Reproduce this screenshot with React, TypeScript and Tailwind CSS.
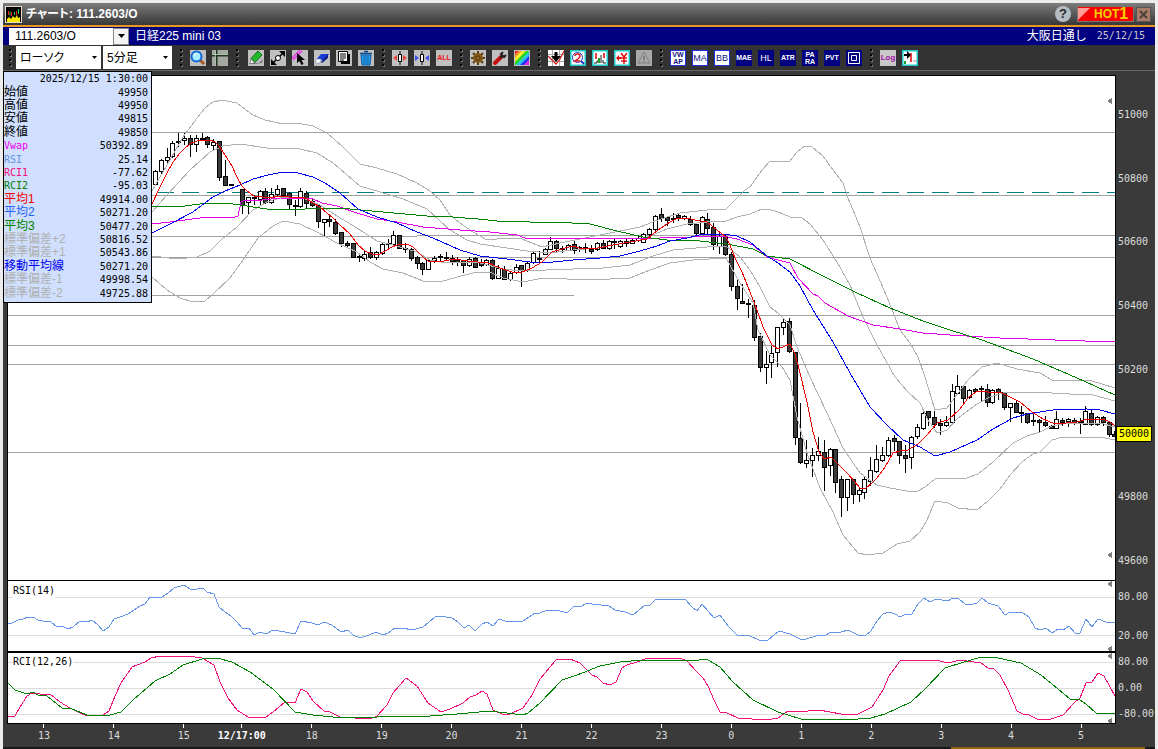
import type { ReactNode } from 'react';

// high, body top, body bottom, low, 1 = down candle
type Candle = [number, number, number, number, 0 | 1];

const FIRST_X = 155.5;
const STEP = 5.815;

const candles: (Candle | null)[] = [
    [170, 171, 184, 185, 0], [159, 160, 171, 173, 0], [148, 157, 160, 162, 0], [141, 143, 156, 157, 0],
    [133, 141, 142, 146, 0], [133, 138, 140, 144, 0], [135, 138, 144, 156, 1], [135, 138, 144, 151, 0],
    [133, 138, 139, 140, 1], [136, 137, 144, 147, 1], [139, 142, 145, 149, 0], [141, 141, 177, 180, 1],
    [160, 176, 185, 185, 1], [184, 184, 185, 185, 1], null, [189, 189, 205, 213, 1],
    [197, 197, 202, 213, 0], [195, 197, 198, 204, 1], [190, 191, 199, 204, 0], [188, 191, 202, 203, 1],
    [188, 194, 202, 203, 0], [185, 189, 194, 196, 0], [188, 188, 195, 196, 1], [192, 193, 204, 209, 1],
    [200, 205, 206, 215, 1], [188, 191, 206, 207, 0], [191, 193, 203, 207, 1], [199, 201, 205, 206, 1],
    [204, 205, 221, 227, 1], [219, 219, 222, 236, 0], [216, 219, 221, 226, 1], [219, 222, 233, 234, 1],
    [232, 232, 243, 246, 1], [241, 243, 245, 247, 1], [243, 243, 257, 257, 1], [253, 256, 257, 261, 1],
    [251, 254, 258, 260, 0], [247, 252, 257, 258, 1], [251, 252, 257, 259, 0], [243, 244, 253, 254, 0],
    [239, 243, 244, 249, 1], [231, 235, 244, 244, 0], [235, 235, 248, 248, 1], [243, 248, 249, 252, 1],
    [248, 249, 258, 260, 1], [256, 257, 263, 268, 1], [262, 263, 269, 274, 1], [260, 260, 269, 269, 0],
    [256, 258, 260, 262, 0], [254, 256, 257, 260, 0], [252, 257, 258, 260, 0], [255, 258, 261, 264, 1],
    [257, 260, 262, 265, 1], [260, 260, 265, 272, 1], [257, 259, 265, 266, 0], [257, 258, 267, 267, 1],
    [259, 262, 265, 266, 1], [259, 260, 264, 265, 0], [259, 260, 278, 279, 1], [265, 268, 278, 278, 0],
    [266, 269, 279, 279, 1], [271, 273, 279, 280, 0], [264, 267, 272, 273, 0], [265, 265, 270, 286, 1],
    [262, 263, 270, 271, 0], [252, 253, 262, 263, 0], [251, 258, 259, 261, 1], [248, 249, 254, 254, 0],
    [237, 241, 249, 249, 0], [240, 241, 248, 251, 1], [246, 248, 249, 252, 1], [244, 245, 250, 250, 0],
    [241, 244, 250, 253, 1], [246, 247, 249, 251, 0], [243, 247, 248, 252, 1], [245, 249, 251, 253, 1],
    [242, 243, 249, 250, 0], [240, 243, 248, 248, 1], [240, 241, 248, 249, 0], [239, 241, 242, 248, 1],
    [240, 241, 246, 247, 0], [238, 241, 243, 246, 1], [239, 240, 243, 243, 0], [235, 238, 240, 241, 0],
    [233, 234, 242, 242, 0], [228, 229, 234, 235, 0], [215, 216, 229, 230, 0], [208, 214, 218, 221, 1],
    [216, 217, 220, 225, 1], [213, 218, 219, 222, 1], [213, 215, 217, 220, 1], [215, 216, 218, 219, 0],
    [216, 219, 224, 225, 1], [223, 224, 233, 234, 1], [216, 217, 233, 234, 0], [213, 219, 228, 233, 1],
    [223, 227, 244, 249, 1], [233, 236, 246, 253, 0], [235, 236, 254, 255, 1], [252, 254, 286, 290, 1],
    [278, 286, 298, 309, 1], [284, 301, 303, 303, 1], [299, 303, 304, 317, 1], [300, 305, 337, 340, 1],
    [333, 336, 367, 371, 1], [351, 364, 367, 383, 0], [346, 353, 362, 377, 0], [327, 327, 352, 366, 0],
    [319, 322, 327, 334, 0], [318, 321, 351, 352, 1], [352, 352, 437, 444, 1], [403, 438, 462, 463, 1],
    [440, 460, 463, 467, 0], [448, 455, 460, 476, 0], [437, 451, 455, 460, 0], [440, 452, 467, 490, 1],
    [448, 449, 465, 475, 0], [449, 449, 482, 492, 1], [476, 479, 497, 516, 1], [479, 479, 497, 510, 0],
    [479, 479, 494, 503, 1], [488, 490, 494, 501, 0], [477, 479, 492, 498, 0], [457, 470, 481, 485, 0],
    [445, 459, 471, 472, 0], [447, 455, 460, 461, 0], [437, 440, 455, 456, 0], [435, 438, 441, 450, 1],
    [441, 441, 455, 463, 1], [445, 455, 458, 472, 1], [436, 437, 457, 468, 0], [424, 427, 436, 438, 0],
    [409, 413, 428, 429, 0], [411, 411, 417, 425, 1], [411, 417, 424, 427, 1], [419, 423, 425, 434, 1],
    [416, 422, 425, 426, 0], [384, 391, 422, 423, 0], [375, 386, 393, 393, 0], [386, 386, 398, 402, 1],
    [389, 390, 397, 398, 0], [388, 389, 391, 391, 1], [386, 388, 389, 401, 1], [384, 389, 402, 406, 1],
    [389, 390, 402, 403, 0], [388, 389, 392, 399, 1], [392, 392, 407, 409, 1], [403, 403, 407, 421, 0],
    [401, 403, 412, 412, 1], [406, 412, 413, 422, 1], [413, 413, 422, 423, 1], [414, 420, 421, 425, 1],
    [419, 420, 422, 431, 1], [416, 422, 425, 426, 1], [425, 426, 428, 428, 1], [411, 419, 428, 428, 0],
    [418, 420, 422, 425, 1], [418, 419, 421, 426, 0], [418, 420, 422, 424, 1], [418, 421, 422, 433, 1],
    [406, 411, 424, 424, 0], [410, 413, 424, 425, 1], [416, 417, 424, 425, 0], [416, 417, 422, 425, 1],
    [421, 422, 434, 436, 1], [431, 434, 436, 436, 1],
];

const priceLines = [
    {
        name: '+2',
        color: '#b0b0b0',
        points: '152,191 167,165 183,137 197,118 205,108 213,102 222,100 237,103 253,115 265,120 283,124 297,123 313,126 327,133 343,147 360,164 377,168 397,174 417,183 430,191 440,200 450,215 460,223 473,232 487,240 507,238 522,239 532,243 542,247 560,243 590,237 620,231 640,227 658,220 680,213 707,210 726,209 737,198 745,190 750,187 762,170 770,161 780,161 789,162 797,152 805,146 812,147 823,156 833,170 843,183 848,198 860,227 870,258 887,297 900,330 910,343 918,357 925,377 935,410 947,408 955,397 968,380 982,367 997,363 1017,369 1040,373 1052,380 1092,381 1115,388',
    },
    {
        name: '+1',
        color: '#b0b0b0',
        points: '152,212 167,195 190,170 210,152 223,146 240,144 267,148 300,149 317,153 333,163 360,186 380,192 403,199 427,209 440,221 450,230 467,240 480,244 507,248 527,251 550,253 573,250 597,248 640,240 667,229 687,224 707,222 726,221 737,217 750,214 762,209 768,209 778,212 790,217 802,218 810,224 823,240 837,262 850,285 863,317 877,345 895,377 908,392 920,403 928,420 937,433 947,430 957,419 977,404 990,397 1003,393 1033,392 1070,394 1093,395 1115,401',
    },
    {
        name: '-1',
        color: '#b0b0b0',
        points: '152,256 178,259 197,257 210,251 222,239 237,227 253,210 267,202 283,197 303,198 320,205 337,216 357,228 377,241 397,246 417,252 430,260 440,262 480,263 503,269 520,271 573,269 603,268 630,265 653,256 673,250 707,247 726,246 740,257 750,270 760,287 770,307 778,313 790,325 797,347 810,377 827,413 843,448 860,473 877,485 890,488 907,491 918,491 925,487 935,479 967,478 978,474 993,462 1013,443 1027,436 1040,432 1052,426 1067,423 1100,423 1115,427',
    },
    {
        name: '-2',
        color: '#b0b0b0',
        points: '152,277 167,290 180,298 193,302 205,301 213,294 230,278 243,260 258,238 273,226 283,221 300,224 317,232 337,243 357,252 370,262 383,269 403,273 423,281 440,282 457,277 473,273 490,272 503,278 523,282 543,278 590,280 630,278 650,270 670,263 693,260 726,258 740,283 753,303 758,330 770,355 782,367 790,380 797,417 807,453 820,488 833,512 843,535 858,553 867,555 883,553 897,544 910,541 920,532 927,520 935,501 948,503 958,508 977,510 988,501 1000,489 1010,475 1023,461 1033,454 1040,452 1052,440 1063,437 1100,437 1115,440',
    },
    {
        name: 'vwap',
        color: '#e800e8',
        points: '152,224 170,222 200,218 235,217 238,216 241,202 245,200 253,201 280,198 313,199 322,203 337,206 357,213 377,219 397,222 423,227 460,230 490,232 517,235 525,238 557,238 627,239 693,237 723,236 737,239 753,245 767,257 778,260 790,263 798,278 813,294 818,296 825,303 848,316 873,325 900,329 923,333 950,335 1000,338 1055,340 1115,342',
    },
    {
        name: 'ma3',
        color: '#008000',
        points: '152,206 177,207 208,203 233,204 267,209 293,210 317,208 350,209 383,212 427,216 440,216 478,219 497,221 530,222 553,222 590,224 617,231 643,237 667,240 700,241 727,244 753,249 767,256 790,259 823,276 857,293 890,308 923,321 950,330 982,340 1033,359 1077,378 1115,395',
    },
    {
        name: 'ma2',
        color: '#0000f0',
        points: '152,233 170,224 193,212 213,197 225,191 240,185 253,179 268,175 283,172 298,173 313,177 325,183 340,193 358,209 377,217 397,223 417,232 433,238 460,250 480,256 507,259 530,262 553,262 573,260 600,258 620,256 640,251 657,246 670,241 687,238 703,234 723,234 737,236 750,242 767,256 778,263 790,272 800,286 813,310 833,342 850,373 870,407 887,425 903,440 920,447 935,456 950,452 977,440 993,429 1013,418 1027,414 1053,410 1087,409 1100,410 1115,414',
    },
    {
        name: 'ma1',
        color: '#f00000',
        points: '152,204 160,187 167,173 173,162 180,153 185,148 190,144 197,141 202,140 210,140 215,142 219,146 225,155 232,166 237,177 242,186 247,191 254,196 263,197 271,198 278,196 285,196 293,198 302,197 307,199 313,203 320,207 327,213 333,218 340,225 350,234 358,245 365,251 372,254 378,255 385,251 392,247 397,245 407,244 413,247 423,257 428,261 440,262 453,259 468,261 488,263 500,268 512,272 522,272 532,268 542,262 552,252 562,249 572,246 583,249 598,248 613,245 630,242 647,239 658,230 670,222 678,218 687,218 695,220 707,222 717,230 726,237 730,245 735,258 742,272 750,292 757,310 763,327 772,345 778,349 790,344 795,354 800,373 807,402 813,432 819,452 824,459 831,457 837,463 842,468 848,474 860,488 866,488 872,483 877,478 885,467 893,453 900,451 908,450 918,444 927,435 937,423 948,420 960,409 968,398 977,391 988,392 1000,392 1010,397 1020,402 1032,412 1043,419 1055,424 1077,422 1088,419 1103,419 1110,422 1115,426',
    },
];

const RSI =
    '8,623 12,623 18,620 23,619 28,617 33,617 38,620 43,621 51,622 57,627 62,626 68,629 73,627 80,621 87,622 92,620 98,625 103,631 109,627 114,619 120,617 128,614 134,610 140,606 145,604 150,597 162,597 168,593 174,588 184,585 190,589 197,589 203,588 207,592 214,594 219,607 225,612 231,616 237,622 242,628 249,628 254,635 260,632 266,634 273,630 285,632 295,634 301,621 312,623 318,625 324,622 332,625 341,632 348,630 353,635 360,638 369,635 376,632 383,635 388,633 395,628 403,628 412,630 423,627 435,617 440,616 452,618 458,622 464,628 469,625 475,631 482,624 487,622 493,626 499,619 505,621 523,621 535,613 540,613 547,610 557,610 567,613 574,606 580,607 587,603 592,604 609,606 615,610 625,612 633,615 645,605 650,605 656,599 662,600 670,599 685,599 692,607 697,611 702,604 708,611 714,618 720,615 728,626 737,635 748,635 761,641 768,640 779,631 790,634 800,639 806,639 816,636 826,635 831,632 841,632 848,630 860,636 866,635 871,631 877,621 883,614 889,612 895,614 900,617 906,614 912,614 918,604 924,598 930,602 936,599 948,601 953,598 959,599 965,604 973,604 977,603 982,598 988,603 998,606 1005,615 1010,612 1023,613 1029,617 1035,628 1040,630 1046,628 1052,633 1058,629 1063,630 1069,626 1075,633 1080,633 1086,619 1092,627 1098,619 1106,622 1115,623';
const RCI1 =
    '8,716 15,716 20,707 27,696 32,693 40,694 50,694 60,702 70,708 80,713 87,716 103,715 109,711 115,696 121,683 132,667 145,662 151,658 160,656 187,656 202,658 214,665 220,682 228,698 237,710 248,717 266,717 273,712 285,702 295,703 301,689 307,692 313,701 324,711 330,712 340,717 370,719 377,716 387,705 393,693 406,678 417,686 428,703 441,712 450,709 463,703 470,697 476,695 482,691 487,694 493,710 502,714 510,714 523,708 532,695 540,679 550,667 556,660 570,659 580,663 592,675 597,677 603,683 610,685 616,682 622,668 627,665 637,662 648,658 680,658 687,661 697,672 703,678 708,686 714,700 720,712 727,713 738,718 766,720 778,718 788,711 808,711 819,710 841,714 858,714 872,707 883,690 889,676 900,661 925,660 940,661 948,663 960,660 981,663 988,668 994,669 1000,675 1008,690 1017,711 1023,714 1029,715 1037,719 1051,719 1063,715 1075,702 1080,698 1086,683 1092,682 1098,673 1104,676 1115,696';
const RCI2 =
    '8,683 15,690 27,694 33,692 38,695 47,696 62,708 72,709 87,715 110,715 121,712 133,700 155,681 170,674 183,665 202,659 217,658 232,662 250,672 273,689 295,712 313,715 333,717 377,717 403,716 430,716 457,714 490,711 523,715 528,713 540,703 562,680 577,675 600,666 620,662 643,660 680,660 695,661 703,659 708,660 720,667 733,682 753,700 778,712 801,719 858,719 871,718 885,714 911,702 925,689 945,668 961,663 981,657 998,658 1021,663 1041,675 1058,689 1070,699 1080,700 1086,704 1096,713 1115,713';

const legend = [
    { label: '始値', value: '49950', tone: 'text-black' },
    { label: '高値', value: '49950', tone: 'text-black' },
    { label: '安値', value: '49815', tone: 'text-black' },
    { label: '終値', value: '49850', tone: 'text-black' },
    { label: 'Vwap', value: '50392.89', tone: 'text-[#f000f0]', mono: true },
    { label: 'RSI', value: '25.14', tone: 'text-[#6495e0]', mono: true },
    { label: 'RCI1', value: '-77.62', tone: 'text-[#f0107c]', mono: true },
    { label: 'RCI2', value: '-95.03', tone: 'text-[#008000]', mono: true },
    { label: '平均1', value: '49914.00', tone: 'text-[#f00000]' },
    { label: '平均2', value: '50271.20', tone: 'text-[#1e64f0]' },
    { label: '平均3', value: '50477.20', tone: 'text-[#008000]' },
    { label: '標準偏差+2', value: '50816.52', tone: 'text-[#b0b0b0]' },
    { label: '標準偏差+1', value: '50543.86', tone: 'text-[#b0b0b0]' },
    { label: '移動平均線', value: '50271.20', tone: 'text-[#0000f0]' },
    { label: '標準偏差-1', value: '49998.54', tone: 'text-[#b0b0b0]' },
    { label: '標準偏差-2', value: '49725.88', tone: 'text-[#b0b0b0]' },
];

const hoursAfterOpen = ['18', '19', '20', '21', '22', '23', '0', '1', '2', '3', '4', '5'];

function Grip({ first = false }: { first?: boolean }) {
    return (
        <span className={first ? 'flex w-[3px] flex-col gap-[3px]' : 'ml-2 mr-[7px] flex w-[3px] flex-col gap-[3px]'}>
            {[0, 1, 2, 3].map((n) => (
                <i key={n} className="h-0.5 w-0.5 bg-black shadow-[1px_1px_0_#777]" />
            ))}
        </span>
    );
}

function Tool({ label, tone = 'bg-[#c0c0c0]', children }: { label: string; tone?: string; children: ReactNode }) {
    return (
        <button aria-label={label} className={`h-4 w-4 shrink-0 ${tone}`}>
            <svg viewBox="0 0 16 16" className="block h-4 w-4">{children}</svg>
        </button>
    );
}

function Indicator({ lines, framed = false }: { lines: string[]; framed?: boolean }) {
    return (
        <button
            className={
                framed
                    ? 'flex h-4 w-4 shrink-0 flex-col items-center justify-center border border-[#2030e0] bg-white text-[#101080]'
                    : 'flex h-4 w-4 shrink-0 flex-col items-center justify-center bg-[#000080] text-white'
            }
        >
            {lines.map((line) => (
                <span
                    key={line}
                    className={
                        lines.length > 1
                            ? 'text-[7px] font-bold leading-[7px]'
                            : line.length > 2
                              ? 'text-[7px] font-bold leading-[14px]'
                              : 'text-[9px] leading-[14px]'
                    }
                >
                    {line}
                </span>
            ))}
        </button>
    );
}

function Combo({ label, value, width }: { label: string; value: string; width: string }) {
    return (
        <div className={`relative h-[23px] ${width}`}>
            <select aria-label={label} className="h-full w-full appearance-none bg-white pl-1 text-xs text-black [font-feature-settings:'palt']">
                <option>{value}</option>
            </select>
            <svg viewBox="0 0 5 3" className="pointer-events-none absolute right-1 top-2.5 h-[3px] w-[5px]">
                <path d="M0 0h5L2.5 3z" />
            </svg>
        </div>
    );
}

function Marker({ y }: { y: number }) {
    return <path d={`M1107 ${y}l5-3v6z`} fill="#808080" />;
}

export default function App() {
    return (
        <div className="flex h-screen flex-col overflow-hidden border-x-[3px] border-t-[3px] border-[#ececec] bg-[#3a3a3a] font-['Liberation_Sans','Noto_Sans_CJK_JP',sans-serif] text-xs">
            {/* Title bar */}
            <header className="flex h-[22px] shrink-0 items-center bg-linear-to-b from-[#7c7c7c] to-[#383838] pl-0.5 pr-1">
                <svg viewBox="0 0 17 17" className="h-[17px] w-[17px]">
                    <rect x=".5" y=".5" width="16" height="16" fill="#000" stroke="#e8dcc8" />
                    <path d="M2 16v-3l2-2 2 2 2-3 2 2 2-3 1 3 2-1v5z" fill="#f8e800" />
                    <path d="M3.500 5v4M6.500 6v4M11.500 5v4" stroke="#f02020" />
                    <path d="M5 5.500v4M9.500 6v3M13.500 3v5" stroke="#20d060" />
                </svg>
                <h1 className="ml-1 text-xs font-bold text-white [font-feature-settings:'palt']">チャート: 111.2603/O</h1>
                <button aria-label="ヘルプ" className="ml-auto flex h-4 w-4 items-center justify-center rounded-full bg-[#b4bcc4] text-[13px] font-bold leading-4 text-[#282828]">?</button>
                <button className="ml-1.5 flex h-4 w-[57px] items-center border border-[#777] bg-[#f80000] text-[#f0d000]">
                    <svg viewBox="0 0 12 12" className="h-3.5 w-3">
                        <path d="M0 0h12L0 12z" fill="#ff9c94" />
                    </svg>
                    <span className="ml-1 text-xs font-bold leading-[14px]">HOT</span>
                    <span className="text-base font-bold leading-[14px]">1</span>
                </button>
                <button aria-label="閉じる" className="ml-0.5 h-[15px] w-[15px] border border-[#555] bg-[#a87c68]">
                    <svg viewBox="0 0 13 13" className="h-full w-full">
                        <path d="M3 3l7 7M10 3l-7 7" stroke="#4c4038" strokeWidth="2" />
                    </svg>
                </button>
            </header>
            <div className="h-0.5 shrink-0 bg-[#e89820]" />

            {/* Symbol bar */}
            <div className="flex h-[18px] shrink-0 items-center bg-[#000080] pl-1.5 pr-2.5 text-white">
                <div className="relative h-[17px] w-[120px]">
                    <select aria-label="銘柄" className="h-full w-full appearance-none bg-white pl-1.5 text-xs leading-4 text-black">
                        <option>111.2603/O</option>
                    </select>
                    <span className="pointer-events-none absolute right-0 top-0 flex h-full w-4 items-center justify-center border border-[#888] bg-[#f4f4f4]">
                        <svg viewBox="0 0 7 4" className="h-1 w-[7px]"><path d="M0 0h7L3.500 4z" /></svg>
                    </span>
                </div>
                <span className="ml-1.5">日経225 mini 03</span>
                <span className="ml-auto">大阪日通し</span>
                <span className="ml-2.5 font-['DejaVu_Sans_Mono'] text-[10px] text-[#c8c8c8]">25/12/15</span>
            </div>

            {/* Toolbar */}
            <div className="flex h-[26px] shrink-0 items-center border-b border-[#666] bg-[#333] pl-1.5">
                <Grip first />
                <div className="ml-1 flex gap-0.5">
                    <Combo label="チャート種別" value="ローソク" width="w-[85px]" />
                    <Combo label="足種" value="5分足" width="w-[69px]" />
                </div>
                <Grip />
                <div className="flex gap-1.5">
                    <Tool label="拡大">
                        <path d="M10 10l4 4" stroke="#b05820" strokeWidth="3" />
                        <circle cx="6.500" cy="6.500" r="5" fill="#a8ecff" stroke="#1068d8" strokeWidth="2" />
                        <path d="M4 6q1-3 3-3" stroke="#fff" fill="none" />
                    </Tool>
                    <Tool label="十字線" tone="bg-[#a4a8a0]">
                        <path d="M0 5.500h16M4.500 0v16" stroke="#203820" strokeWidth="2" />
                        <path d="M0 4.500h16M3.500 0v16" stroke="#e0f0e0" strokeWidth=".6" />
                    </Tool>
                </div>
                <Grip />
                <div className="ml-0.5 flex gap-1.5">
                    <Tool label="ペン">
                        <path d="M1 14h4l9-1 1-4-4 4H2z" fill="#707070" />
                        <path d="M3 8.500L10 1l4 4-7 7.500z" fill="#20b828" stroke="#107018" />
                        <path d="M3 9l3.500 3.500L2 14z" fill="#fff" stroke="#555" strokeWidth=".6" />
                    </Tool>
                    <Tool label="ライン移動">
                        <path d="M3 13L13 3" stroke="#000" strokeWidth="1.500" />
                        <path d="M9 1h6v6zM1 9v6h6z" />
                        <circle cx="8" cy="8" r="2.500" fill="#fff" stroke="#000" />
                    </Tool>
                    <Tool label="ライン選択">
                        <path d="M0 8l8-8M1 10l9-9" stroke="#f020f0" strokeWidth="1.200" />
                        <path d="M5 3l8 7H9.500l2 4-2 1-2-4L5 13z" />
                    </Tool>
                    <Tool label="消しゴム">
                        <path d="M7 4h8l-5 6H2z" fill="#1838d8" />
                        <path d="M2 9h5l-1 4H2z" fill="#fff" stroke="#8890b0" strokeWidth=".6" />
                        <path d="M7 12l7-8v4l-6 5z" fill="#102088" />
                    </Tool>
                    <Tool label="コピー">
                        <path d="M5 4h9v10H5z" />
                        <path d="M2.500 1.500h9v10h-9z" fill="#fff" stroke="#000" />
                        <path d="M4 4h6M4 6h6M4 8h6M4 10h4" stroke="#000" />
                    </Tool>
                    <Tool label="削除">
                        <path d="M2 3.500h12M6 1.500h4" stroke="#084888" strokeWidth="1.500" />
                        <path d="M3 5h10l-1 10H4z" fill="#28a0e8" stroke="#0858a8" />
                        <path d="M6 6v8M8 6v8M10 6v8" stroke="#0858a8" strokeWidth=".8" />
                    </Tool>
                </div>
                <Grip />
                <div className="flex gap-1.5">
                    <Tool label="間隔を広げる">
                        <path d="M5 5v6L1 8zM11 5v6l4-3z" fill="#e84838" />
                        <path d="M8 1v14" stroke="#000" />
                        <path d="M6.500 4.500h3v7h-3z" fill="#fff" stroke="#000" />
                    </Tool>
                    <Tool label="間隔を狭める">
                        <path d="M1 5v6l4-3zM15 5v6l-4-3z" fill="#4050f0" />
                        <path d="M8 1v14" stroke="#000" />
                        <path d="M6.500 4.500h3v7h-3z" fill="#fff" stroke="#000" />
                    </Tool>
                    <button className="h-4 w-4 bg-[#c0c0c0] text-[7px] font-bold leading-4 text-[#f01010]">ALL</button>
                </div>
                <Grip />
                <div className="flex gap-1.5">
                    <Tool label="設定">
                        <path d="M8 1v14M1 8h14M3 3l10 10M13 3L3 13" stroke="#5c3c10" strokeWidth="2" />
                        <circle cx="8" cy="8" r="5" fill="#805818" />
                        <circle cx="8" cy="8" r="2" fill="#a07028" stroke="#503008" />
                    </Tool>
                    <Tool label="ツール">
                        <path d="M3 13l6-6" stroke="#c81010" strokeWidth="4" strokeLinecap="round" />
                        <path d="M8 8l3-3M11 2L9 4l3 3 2-2" stroke="#202020" strokeWidth="2" fill="none" />
                    </Tool>
                    <Tool label="配色">
                        <path d="M1 1h4L1 5z" fill="#f02020" />
                        <path d="M5 1h3L1 8V5z" fill="#f89820" />
                        <path d="M8 1h4L1 12V8z" fill="#f8f020" />
                        <path d="M12 1h3v1L2 15H1v-3z" fill="#20d820" />
                        <path d="M15 2v4l-9 9H2z" fill="#20c8f0" />
                        <path d="M15 6v4l-5 5H6z" fill="#2030f0" />
                        <path d="M15 10v5h-5z" fill="#e020e0" />
                    </Tool>
                </div>
                <Grip />
                <div className="flex gap-1.5">
                    <Tool label="売買" tone="bg-white">
                        <path d="M4.500 0v16M11.500 0v16M0 4.500h16M0 11.500h16" stroke="#aaa" />
                        <path d="M0 6l4 4 4 4 4-5 4-8" stroke="#d01818" fill="none" strokeWidth="1.200" />
                        <path d="M6.500 2h3v4H13l-5 6-5-6h3.500z" fill="#000" />
                    </Tool>
                    <Tool label="銘柄検索" tone="bg-white">
                        <path d="M.5.5h15v15H.5z" stroke="#20c8c8" strokeWidth="2" fill="none" />
                        <circle cx="7.500" cy="7.500" r="5" stroke="#2038c0" fill="#fff" />
                        <path d="M5 6q0-2 2.500-2T10 6t-5 5h5" stroke="#e01820" strokeWidth="1.500" fill="none" />
                        <path d="M11 11l3 3" stroke="#2038c0" strokeWidth="2" />
                    </Tool>
                    <Tool label="比較" tone="bg-white">
                        <path d="M.5.5h15v15H.5z" stroke="#20c8c8" strokeWidth="2" fill="none" />
                        <path d="M3 3h2v6H3zM11 3h2v5h-2z" fill="#e84040" />
                        <path d="M6 8h2v5H6z" fill="#18a028" />
                        <path d="M2 13h3v-2h1M9 13V5M11 10v3h3" stroke="#202020" fill="none" />
                    </Tool>
                    <Tool label="円換算" tone="bg-white">
                        <path d="M.5.5h15v15H.5z" stroke="#20c8c8" strokeWidth="2" fill="none" />
                        <path d="M7 3l3 4 3-4M10 7v7M7 8h6M7 11h6" stroke="#e01010" strokeWidth="1.500" fill="none" />
                        <path d="M2 8l3-3v2h2v2H5v2z" fill="#e01010" />
                    </Tool>
                    <Tool label="アラート" tone="bg-[#a8a8a8]">
                        <path d="M8 2l6 11H2z" fill="none" stroke="#808080" />
                        <path d="M8 6v4M8 11v1" stroke="#707070" strokeWidth="1.500" />
                    </Tool>
                </div>
                <Grip />
                <div className="flex gap-1.5">
                    <Indicator lines={['VW', 'AP']} framed />
                    <Indicator lines={['MA']} framed />
                    <Indicator lines={['BB']} framed />
                    <Indicator lines={['MAE']} />
                    <Indicator lines={['HL']} />
                    <Indicator lines={['ATR']} />
                    <Indicator lines={['PA', 'RA']} />
                    <Indicator lines={['PVT']} />
                    <Tool label="枠" tone="bg-[#000080]">
                        <path d="M2.500 2.500h11v11h-11zM5.500 5.500h5v5h-5z" fill="none" stroke="#fff" />
                    </Tool>
                </div>
                <Grip />
                <div className="flex gap-1.5">
                    <button className="h-4 w-4 bg-[#c8c8c8] text-[8px] font-bold leading-4 text-[#a010a0]">Log</button>
                    <Tool label="右寄せ" tone="bg-white">
                        <path d="M.5.5h15v15H.5z" stroke="#20c8c8" strokeWidth="2" fill="none" />
                        <path d="M8 3h2v9H8z" fill="#e84040" />
                        <path d="M2 4h3V1l4 4-4 4V6H2z" />
                        <path d="M2 11h2v3H2z" fill="#18a028" />
                        <path d="M11 11h4" stroke="#999" />
                    </Tool>
                </div>
            </div>

            {/* Charts */}
            <main className="relative flex min-h-0 flex-1 flex-col pl-1 pt-1 font-['DejaVu_Sans_Mono'] text-[10px]">
                <section className="flex min-h-0 flex-1">
                    <svg viewBox="8 76 1107 504" preserveAspectRatio="none" shapeRendering="crispEdges" className="h-full min-w-0 flex-1 border border-black bg-white">
                        <g stroke="#a0a0a0" fill="none">
                            {[132.5, 195.5, 257.5, 315.5, 345.5, 364.5, 452.5].map((y) => (
                                <path key={y} d={`M7 ${y}H1116`} />
                            ))}
                            <path d="M7 236.500H417M417 235.500H1116M7 295.500H574" />
                        </g>
                        <path d="M157 192.500H1116" stroke="#008080" strokeDasharray="17 8" />
                        {candles.map((c, i) => {
                            if (!c) return null;
                            const [high, top, bottom, low, down] = c;
                            const x = Math.floor(FIRST_X + i * STEP) + 0.5;
                            return (
                                <g key={i} stroke="#000">
                                    <path d={`M${x} ${high}V${low + 1}`} />
                                    <rect x={x - 2} y={top + 0.5} width="4" height={bottom - top} fill={down ? '#3a3a3a' : '#fff'} />
                                </g>
                            );
                        })}
                        {priceLines.map((line) => (
                            <polyline key={line.name} points={line.points} fill="none" stroke={line.color} />
                        ))}
                        <Marker y={101} />
                        <Marker y={555} />
                    </svg>
                    <div className="flex w-[39px] flex-col justify-between pb-3 pl-0.5 pt-8 leading-4 text-[#dcdcdc]">
                        <span>51000</span>
                        <span>50800</span>
                        <span>50600</span>
                        <span>50400</span>
                        <span>50200</span>
                        <span className="-ml-0.5 w-9 border border-black bg-[#ffff00] pl-0.5 leading-[14px] text-black">50000</span>
                        <span>49800</span>
                        <span>49600</span>
                    </div>
                </section>

                <section className="flex h-[71px] shrink-0">
                    <div className="relative min-w-0 flex-1">
                        <svg viewBox="8 581 1107 70" preserveAspectRatio="none" shapeRendering="crispEdges" className="block h-full w-full border-x border-b border-black bg-white">
                            <path d="M7 597.500H1116M7 635.500H1116" stroke="#dcdcdc" />
                            <polyline points={RSI} fill="none" stroke="#6495e8" />
                            <Marker y={584} />
                            <Marker y={649} />
                        </svg>
                        <h2 className="absolute left-1.5 top-0.5 bg-white leading-4 text-black">RSI(14)</h2>
                    </div>
                    <div className="flex w-[39px] flex-col justify-between pb-2 pl-0.5 pt-2 leading-4 text-[#dcdcdc]">
                        <span>80.00</span>
                        <span>20.00</span>
                    </div>
                </section>

                <section className="flex h-[72px] shrink-0">
                    <div className="relative min-w-0 flex-1">
                        <svg viewBox="8 653 1107 70" preserveAspectRatio="none" shapeRendering="crispEdges" className="block h-full w-full border border-black bg-white">
                            <path d="M7 662.500H1116M7 688.500H1116M7 714.500H1116" stroke="#dcdcdc" />
                            <polyline points={RCI1} fill="none" stroke="#f0107c" />
                            <polyline points={RCI2} fill="none" stroke="#008000" />
                            <Marker y={656} />
                            <Marker y={721} />
                        </svg>
                        <h2 className="absolute left-1.5 top-0.5 bg-white leading-4 text-black">RCI(12,26)</h2>
                    </div>
                    <div className="flex w-[39px] flex-col justify-between pb-0.5 pl-0.5 pt-0.5 leading-4 text-[#dcdcdc]">
                        <span>80.00</span>
                        <span>0.00</span>
                        <span>-80.00</span>
                    </div>
                </section>

                {/* Time axis */}
                <div className="mr-[39px] grid h-[23px] shrink-0 grid-cols-[2fr_repeat(3,minmax(0,70fr))_minmax(0,46fr)_12fr_repeat(12,minmax(0,70fr))] text-[#dcdcdc]">
                    <i />
                    {['13', '14', '15'].map((hour) => (
                        <span key={hour} className="flex flex-col items-center leading-4 before:h-1 before:w-px before:bg-white">{hour}</span>
                    ))}
                    <b className="flex flex-col items-center whitespace-nowrap leading-4 text-white before:h-1 before:w-px before:bg-white">12/17:00</b>
                    <i />
                    {hoursAfterOpen.map((hour) => (
                        <span key={hour} className="flex flex-col items-center leading-4 before:h-1 before:w-px before:bg-white">{hour}</span>
                    ))}
                </div>

                {/* Value window */}
                <div className="absolute left-0 top-0 w-[149px] border border-black bg-[#cfdffd] pb-0.5">
                    <table className="h-[228px] w-full border-collapse leading-[13px] text-black">
                        <tbody>
                            <tr>
                                <th colSpan={2} className="p-0 pr-[3px] text-right font-normal">2025/12/15 1:30:00</th>
                            </tr>
                            {legend.map((row) => (
                                <tr key={row.label}>
                                    <th
                                        className={
                                            row.mono
                                                ? `p-0 text-left font-normal ${row.tone}`
                                                : `whitespace-nowrap p-0 text-left font-['Liberation_Sans','Noto_Sans_CJK_JP',sans-serif] text-xs font-normal leading-[13px] ${row.tone}`
                                        }
                                    >
                                        {row.label}
                                    </th>
                                    <td className="p-0 pr-[3px] text-right">{row.value}</td>
                                </tr>
                            ))}
                        </tbody>
                    </table>
                </div>
            </main>

            <footer className="flex h-0.5 shrink-0 justify-end bg-[#181818] pr-2.5">
                <span className="w-[17%] bg-[#8c6414]" />
            </footer>
        </div>
    );
}
